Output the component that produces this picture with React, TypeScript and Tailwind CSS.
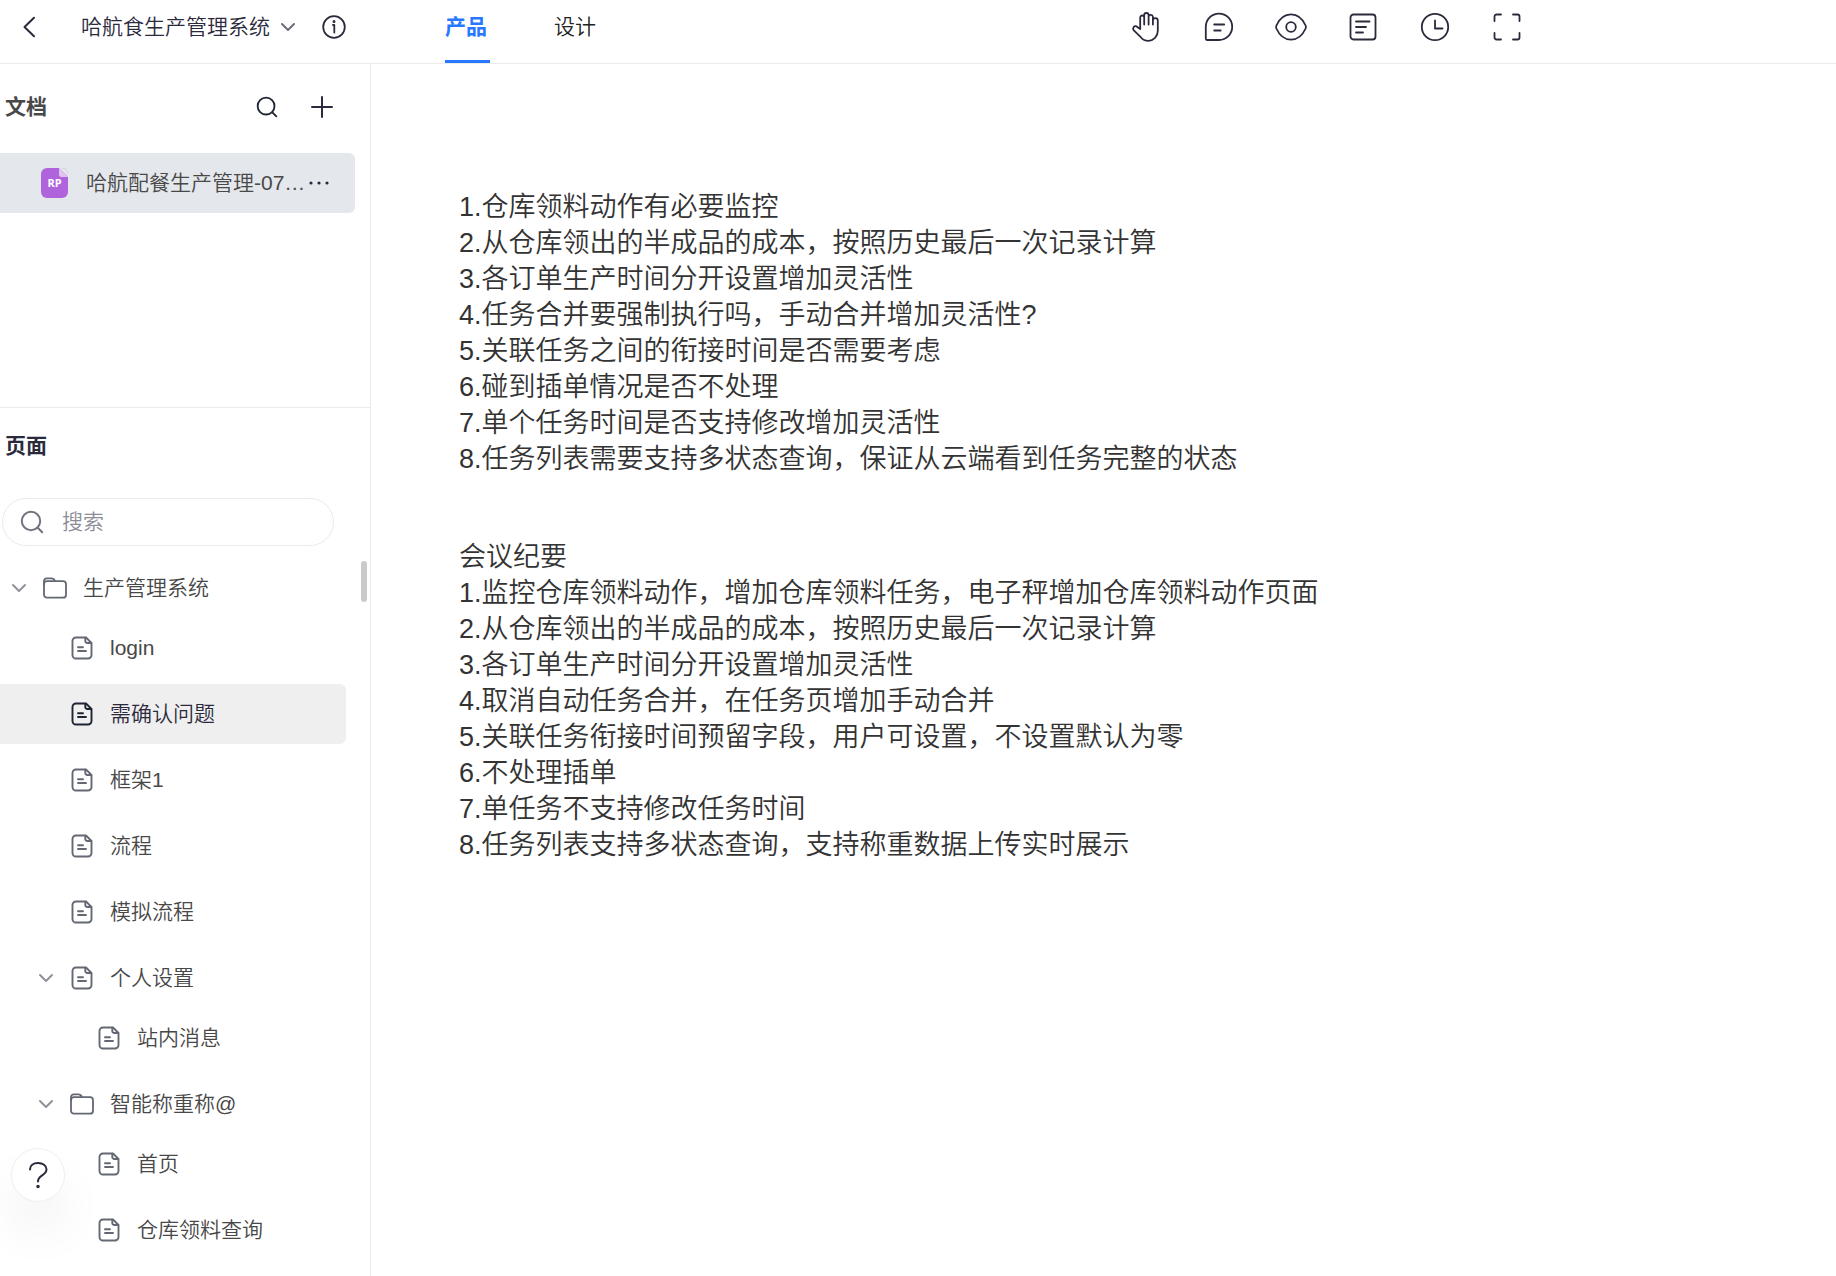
import { useState } from 'react';
import type { ReactNode } from 'react';

type TreeNode = {
  name: string;
  kind: 'folder' | 'page';
  children?: TreeNode[];
};

const TREE: TreeNode[] = [
  {
    name: '生产管理系统',
    kind: 'folder',
    children: [
      { name: 'login', kind: 'page' },
      { name: '需确认问题', kind: 'page' },
      { name: '框架1', kind: 'page' },
      { name: '流程', kind: 'page' },
      { name: '模拟流程', kind: 'page' },
      { name: '个人设置', kind: 'page', children: [{ name: '站内消息', kind: 'page' }] },
      {
        name: '智能称重称@',
        kind: 'folder',
        children: [
          { name: '首页', kind: 'page' },
          { name: '仓库领料查询', kind: 'page' },
        ],
      },
    ],
  },
];

const QUESTIONS = [
  '1.仓库领料动作有必要监控',
  '2.从仓库领出的半成品的成本，按照历史最后一次记录计算',
  '3.各订单生产时间分开设置增加灵活性',
  '4.任务合并要强制执行吗，手动合并增加灵活性?',
  '5.关联任务之间的衔接时间是否需要考虑',
  '6.碰到插单情况是否不处理',
  '7.单个任务时间是否支持修改增加灵活性',
  '8.任务列表需要支持多状态查询，保证从云端看到任务完整的状态',
];

const MINUTES = [
  '1.监控仓库领料动作，增加仓库领料任务，电子秤增加仓库领料动作页面',
  '2.从仓库领出的半成品的成本，按照历史最后一次记录计算',
  '3.各订单生产时间分开设置增加灵活性',
  '4.取消自动任务合并，在任务页增加手动合并',
  '5.关联任务衔接时间预留字段，用户可设置，不设置默认为零',
  '6.不处理插单',
  '7.单任务不支持修改任务时间',
  '8.任务列表支持多状态查询，支持称重数据上传实时展示',
];

const TABS = ['产品', '设计'];

// 24 宽的描边图标
function Icon({ className, width = 1.5, children }: { className: string; width?: number; children: ReactNode }) {
  return (
    <svg
      viewBox="0 0 24 24"
      className={`shrink-0 ${className}`}
      fill="none"
      stroke="currentColor"
      strokeWidth={width}
      strokeLinecap="round"
      strokeLinejoin="round"
      aria-hidden="true"
    >
      {children}
    </svg>
  );
}

function ChevronIcon({ className }: { className: string }) {
  return (
    <svg viewBox="0 0 16 10" className={`shrink-0 ${className}`} fill="none" stroke="currentColor" strokeWidth="2" strokeLinecap="round" strokeLinejoin="round" aria-hidden="true">
      <path d="M2 2l6 6 6-6" />
    </svg>
  );
}

function SearchIcon({ className, width }: { className: string; width?: number }) {
  return (
    <Icon className={className} width={width}>
      <circle cx="11" cy="11" r="9.2" />
      <path d="M17.8 17.8l4.4 4.4" />
    </Icon>
  );
}

function PageIcon({ className }: { className: string }) {
  return (
    <Icon className={className} width={1.9}>
      <path d="M16 1.500H6a3.500 3.500 0 0 0-3.500 3.500v14A3.500 3.500 0 0 0 6 22.500h12a3.500 3.500 0 0 0 3.500-3.500V7z" />
      <path d="M15.300 1.800v3.200a2 2 0 0 0 2 2h3.900" />
      <path d="M8 11.200h5M8 15h8" />
    </Icon>
  );
}

function FolderIcon({ className }: { className: string }) {
  return (
    <Icon className={className} width={1.8}>
      <rect x="1" y="5.200" width="22" height="16.500" rx="3" />
      <path d="M1 8.500V5a2.700 2.700 0 0 1 2.700-2.700h4.600c1.700 0 2.900.8 3.700 2.700" />
    </Icon>
  );
}

// 顶栏工具图标，32 网格
const TOOLS: { label: string; shape: ReactNode }[] = [
  {
    label: '拖动',
    shape: (
      <path d="M9.200 18V6.500a2 2 0 0 1 4 0V13.500M13.200 6V4.200a2.200 2.200 0 0 1 4.400 0V13.500M17.600 5.500a2.200 2.200 0 0 1 4.300.3V13.500M21.900 9.500a2.400 2.400 0 0 1 4.900 0v10.500c0 5.500-4.300 9.800-9.300 9.800-3.500 0-5.800-1.200-7.700-3.600l-7-6.800c-1.800-2.100.3-5.200 2.800-4l3.600 2.600" />
    ),
  },
  {
    label: '评论',
    shape: (
      <>
        <path d="M16 2.600A13.200 13.200 0 0 1 16 29H4a1.200 1.200 0 0 1-1.200-1.200V15.800A13.200 13.200 0 0 1 16 2.600z" />
        <path d="M11.200 13.500h10M11.200 19.500h6.500" />
      </>
    ),
  },
  {
    label: '预览',
    shape: (
      <>
        <path d="M1.400 14.500C4.500 7.500 9.600 3.400 16 3.400s11.500 4.100 14.600 11.100c.4 1 .4 2 0 3C27.500 24.500 22.400 28.600 16 28.600S4.500 24.500 1.400 17.500c-.4-1-.4-2 0-3z" />
        <circle cx="16" cy="16" r="4.800" />
      </>
    ),
  },
  {
    label: '备注',
    shape: (
      <>
        <rect x="3.500" y="3.500" width="25" height="25" rx="3" />
        <path d="M9 10.500h13.500M9 16h10M9 21.500h7" />
      </>
    ),
  },
  {
    label: '历史',
    shape: (
      <>
        <circle cx="16" cy="16" r="13.200" />
        <path d="M16 9.500v8h7.500" />
      </>
    ),
  },
  {
    label: '全屏',
    shape: <path d="M3.500 10V5.500a2 2 0 0 1 2-2H10M22 3.500h4.500a2 2 0 0 1 2 2V10M28.500 22v4.500a2 2 0 0 1-2 2H22M10 28.500H5.500a2 2 0 0 1-2-2V22" />,
  },
];

const INDENTS = ['pl-[11px]', 'pl-[38px]', 'pl-[65px]'];

function TreeRows({ nodes, level, current, onSelect }: { nodes: TreeNode[]; level: number; current: string; onSelect: (name: string) => void }) {
  return (
    <ul className="space-y-1.5">
      {nodes.map((node) => {
        const active = node.name === current;
        return (
          <li key={node.name}>
            <button
              type="button"
              onClick={() => onSelect(node.name)}
              className={`flex h-[60px] w-full items-center rounded-r-md text-left text-[21px] ${INDENTS[level]} ${
                active ? 'bg-[#efefef] text-[#2b2a3d]' : 'text-[#484848]'
              }`}
            >
              <span className="flex w-8 shrink-0">
                {node.children && <ChevronIcon className="w-4 text-[#92919c]" />}
              </span>
              <span className={`flex w-10 shrink-0 ${active ? 'text-[#1e2433]' : 'text-[#636873]'}`}>
                {node.kind === 'folder' ? <FolderIcon className="size-6" /> : <PageIcon className="size-6" />}
              </span>
              <span className="truncate">{node.name}</span>
            </button>
            {node.children && <TreeRows nodes={node.children} level={level + 1} current={current} onSelect={onSelect} />}
          </li>
        );
      })}
    </ul>
  );
}

export default function App() {
  const [tab, setTab] = useState('产品');
  const [current, setCurrent] = useState('需确认问题');

  return (
    <div className="flex h-screen flex-col overflow-hidden bg-white font-['Liberation_Sans','Noto_Sans_CJK_SC',sans-serif] font-[350] text-[#333]">
      {/* 顶栏 */}
      <header className="flex h-16 shrink-0 border-b border-[#ebebeb] pr-[305px] text-[21px] text-[#2b2a3d]">
        <div className="flex w-[445px] shrink-0 items-center pb-2.5 pl-[21px]">
          <button type="button" aria-label="返回" className="w-[60px]">
            <svg viewBox="0 0 16 24" className="h-6 w-4" fill="none" stroke="currentColor" strokeWidth="2" strokeLinecap="round" strokeLinejoin="round">
              <path d="M13 2.800L3.500 12l9.500 9.200" />
            </svg>
          </button>
          <button type="button" className="flex items-center gap-2.5">
            <h1>哈航食生产管理系统</h1>
            <ChevronIcon className="w-4 text-[#6f6e7b]" />
          </button>
          <button type="button" aria-label="项目信息" className="ml-[26px]">
            <Icon className="size-6" width={1.8}>
              <circle cx="12" cy="12" r="10.800" />
              <path d="M11 10h1.300v7.500" />
              <circle cx="12" cy="6.500" r=".6" fill="currentColor" />
            </Icon>
          </button>
        </div>
        <nav className="flex gap-16">
          {TABS.map((name) => (
            <button
              key={name}
              type="button"
              onClick={() => setTab(name)}
              className={`w-[45px] border-b-[3px] pb-[7px] text-left ${
                name === tab ? 'border-[#2878ff] font-bold text-[#2878ff]' : 'border-transparent text-[#222]'
              }`}
            >
              {name}
            </button>
          ))}
        </nav>
        <div className="ml-auto flex items-center gap-6 pb-2.5">
          {TOOLS.map((tool) => (
            <button key={tool.label} type="button" aria-label={tool.label} className="flex w-12 justify-center">
              <svg viewBox="0 0 32 32" className="size-8" fill="none" stroke="currentColor" strokeWidth="1.800" strokeLinecap="round" strokeLinejoin="round">
                {tool.shape}
              </svg>
            </button>
          ))}
        </div>
      </header>

      <div className="flex min-h-0 flex-1">
        {/* 侧栏 */}
        <aside className="relative w-[371px] shrink-0 border-r border-[#ebebeb]">
          <section className="h-[344px] border-b border-[#ebebeb]">
            <div className="flex h-[85px] items-center pl-[5px] pr-9">
              <h2 className="text-[21px] font-bold text-[#484848]">文档</h2>
              <button type="button" aria-label="搜索文档" className="ml-auto text-[#1e2433]">
                <SearchIcon className="size-[22px]" width={2} />
              </button>
              <button type="button" aria-label="新建文档" className="ml-8">
                <Icon className="size-6 text-[#2b2a3d]" width={2}>
                  <path d="M12 2v20M2 12h20" />
                </Icon>
              </button>
            </div>
            <div className="mr-[15px] mt-1 flex h-[60px] items-center rounded-r-md bg-[#e4e7ec] pl-[41px] pr-[26px] text-[#484848]">
              <span className="relative flex h-[30px] w-[27px] shrink-0 items-center justify-center overflow-hidden rounded-md bg-[#af64dc] font-['Open_Sans',sans-serif] text-[11px] font-bold text-white">
                RP
                <svg viewBox="0 0 9 9" className="absolute right-0 top-0 size-[9px]" aria-hidden="true">
                  <path d="M0 0h9v9z" fill="#e4e7ec" />
                  <path d="M0 0v6.500a2.500 2.500 0 0 0 2.500 2.500H9z" fill="#e2c4f3" />
                </svg>
              </span>
              <a href="#doc" className="ml-[18px] whitespace-nowrap text-[21px]">
                哈航配餐生产管理-07…
              </a>
              <button type="button" aria-label="更多" className="ml-auto shrink-0">
                <svg viewBox="0 0 20 4" className="h-1 w-5 text-[#2b2a3d]" fill="currentColor">
                  <circle cx="2" cy="2" r="1.600" />
                  <circle cx="10" cy="2" r="1.600" />
                  <circle cx="18" cy="2" r="1.600" />
                </svg>
              </button>
            </div>
          </section>

          <section>
            <h2 className="flex h-[76px] items-center pl-[5px] text-[21px] font-bold text-[#2b2a3d]">页面</h2>
            <label className="ml-0.5 mr-9 mt-3.5 flex h-12 items-center gap-[18px] rounded-full border border-[#ebebeb] pl-[17px] pr-5">
              <SearchIcon className="size-6 text-[#73737f]" width={2} />
              <input
                type="text"
                placeholder="搜索"
                aria-label="搜索页面"
                className="min-w-0 flex-1 bg-transparent text-[21px] outline-none placeholder:text-[#8d8d97]"
              />
            </label>
            <div className="mr-6 mt-3">
              <TreeRows nodes={TREE} level={0} current={current} onSelect={setCurrent} />
            </div>
          </section>

          {/* 滚动条与帮助按钮浮在列表上 */}
          <div className="absolute right-[3px] top-[497px] h-[41px] w-1.5 rounded-full bg-[#cacaca]" />
          <button
            type="button"
            aria-label="帮助"
            className="absolute bottom-[74px] left-[11px] flex size-[54px] items-center justify-center rounded-full border border-[#efeff1] bg-white text-[#2b2a3d] shadow-[0_30px_50px_rgba(0,0,0,0.06)]"
          >
            <svg viewBox="0 0 24 30" className="h-[30px] w-6" fill="none" stroke="currentColor" strokeWidth="2" strokeLinecap="round" aria-hidden="true">
              <path d="M4 9.500C4 5.500 7.200 3 12 3s8.500 2.500 8.500 6.300c0 3-1.800 4.500-4.300 6-2.700 1.600-4.200 2.800-4.200 6.200" />
              <circle cx="12" cy="26.500" r=".8" fill="currentColor" />
            </svg>
          </button>
        </aside>

        {/* 画布内容 */}
        <main className="min-w-0 flex-1 pl-[88px] pt-[125px] text-[27px] leading-9">
          {QUESTIONS.map((line) => (
            <p key={line}>{line}</p>
          ))}
          <h2 className="mt-[62px]">会议纪要</h2>
          {MINUTES.map((line) => (
            <p key={line}>{line}</p>
          ))}
        </main>
      </div>
    </div>
  );
}
